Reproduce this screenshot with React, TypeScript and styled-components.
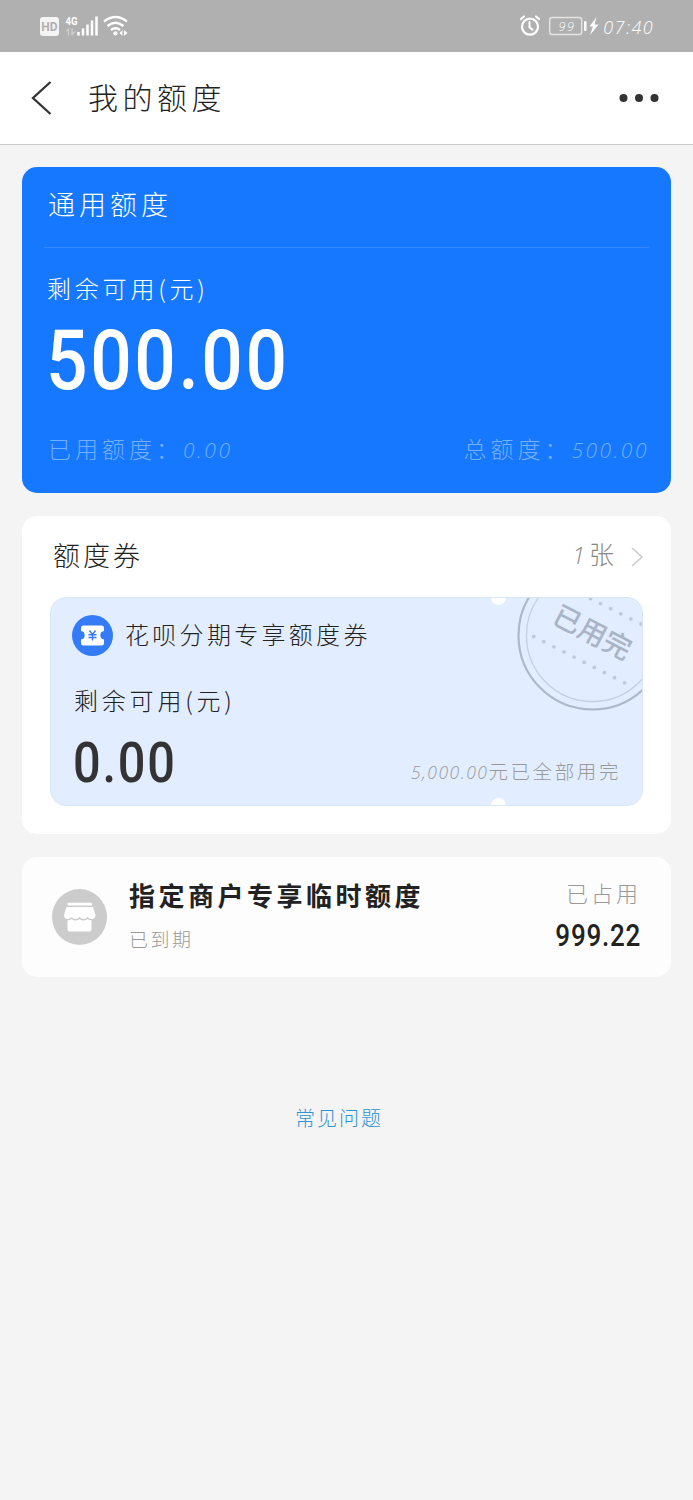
import React from 'react';
import styled, { createGlobalStyle } from 'styled-components';

const GlobalStyle = createGlobalStyle`
  * { box-sizing: border-box; }
  body {
    margin: 0;
    background: #f4f4f4;
    font-family: 'Noto Sans CJK SC', sans-serif;
    font-weight: 300;
  }
`;

const Page = styled.div`
  width: 693px;
  height: 1500px;
  background: #f4f4f4;
  display: flex;
  flex-direction: column;
  overflow: hidden;
`;

const StatusBar = styled.div`
  height: 52px;
  background: #b0b0b0;
  display: flex;
  justify-content: space-between;
  align-items: center;
  padding: 0 39px 0 39px;
`;

const StatusGroup = styled.div`
  display: flex;
  align-items: center;
  height: 52px;
`;

const Clock = styled.span`
  font-family: 'Open Sans', sans-serif;
  font-style: italic;
  font-weight: 300;
  font-size: 18px;
  line-height: 24px;
  letter-spacing: 1.4px;
  color: #fff;
  padding-top: 1px;
  margin-left: 3px;
`;

const NavBar = styled.header`
  height: 93px;
  background: #fff;
  border-bottom: 1px solid #cacaca;
  display: flex;
  align-items: center;
  padding: 0 34px 0 31px;
`;

const Text = styled.span<{ $size: number; $gap?: number; $color?: string; $weight?: number }>`
  font-size: ${(p) => p.$size}px;
  line-height: ${(p) => Math.round(p.$size * 1.4)}px;
  letter-spacing: ${(p) => p.$gap ?? 0}px;
  color: ${(p) => p.$color ?? '#222'};
  font-weight: ${(p) => p.$weight ?? 300};
  white-space: nowrap;
`;

const Title = styled(Text)`
  flex: 1;
  margin: 0 0 0 36px;
  padding-bottom: 5px;
`;

const Slant = styled.span<{ $size: number; $gap: number }>`
  font-family: 'Open Sans', sans-serif;
  font-style: italic;
  font-weight: 300;
  font-size: ${(p) => p.$size}px;
  letter-spacing: ${(p) => p.$gap}px;
`;

const Amount = styled.div<{ $size: number; $gap: number; $color: string; $right?: boolean }>`
  font-family: Roboto, sans-serif;
  font-weight: 500;
  font-size: ${(p) => p.$size}px;
  line-height: 1;
  letter-spacing: ${(p) => p.$gap}px;
  color: ${(p) => p.$color};
  transform: scaleX(${(p) => (p.$right ? 0.84 : 0.87)});
  transform-origin: ${(p) => (p.$right ? 'right' : 'left')} center;
  white-space: nowrap;
`;

const Content = styled.main`
  padding: 22px 22px 0;
  display: flex;
  flex-direction: column;
  gap: 23px;
`;

const QuotaCard = styled.section`
  height: 326px;
  border-radius: 15px;
  background: #1677ff;
  padding: 0 22px 0 26px;
  display: flex;
  flex-direction: column;
`;

const QuotaHead = styled.div`
  height: 81px;
  margin: 0 0 0 -4px;
  padding: 0 0 6px 4px;
  border-bottom: 1px solid #3287ff;
  display: flex;
  align-items: center;
`;

const QuotaLabel = styled.div`
  height: 80px;
  margin-left: -1px;
  display: flex;
  align-items: center;
`;

const QuotaAmount = styled.div`
  margin: -9px 0 0 -2px;
`;

const QuotaFoot = styled.div`
  display: flex;
  justify-content: space-between;
  margin-top: 29px;
`;

const CouponCard = styled.section`
  height: 318px;
  border-radius: 15px;
  background: #fff;
  padding: 0 28px;
`;

const CouponHead = styled.div`
  height: 81px;
  padding: 0 0 4px 3px;
  display: flex;
  align-items: center;
  justify-content: space-between;
`;

const More = styled.div`
  display: flex;
  align-items: center;
  gap: 14px;

  svg {
    margin-top: 4px;
  }
`;

const Coupon = styled.div`
  position: relative;
  height: 209px;
  border-radius: 16px;
  background: #e2eeff;
  border: 1px solid #d8e6fa;
  overflow: hidden;
  padding: 17px 21px 0;
`;

const CouponName = styled.div`
  display: flex;
  align-items: center;
  gap: 12px;
  height: 41px;

  span {
    padding-bottom: 3px;
  }
`;

const CouponLabel = styled.div`
  height: 34px;
  margin: 27px 0 0 2px;
`;

const CouponAmounts = styled.div`
  display: flex;
  justify-content: space-between;
  align-items: flex-end;
  margin: 18px 0 0 1px;
`;

const UsedUp = styled(Text)`
  margin-bottom: 5px;
`;

const Notch = styled.i<{ $bottom?: boolean }>`
  position: absolute;
  left: 440px;
  ${(p) => (p.$bottom ? 'bottom' : 'top')}: -8px;
  width: 15px;
  height: 15px;
  border-radius: 50%;
  background: #fff;
`;

const Stamp = styled.svg`
  position: absolute;
  right: -1px;
  top: -1px;
`;

const MerchantCard = styled.section`
  height: 120px;
  border-radius: 15px;
  background: #fdfdfd;
  display: flex;
  align-items: center;
  padding: 0 30px;
`;

const Column = styled.div<{ $end?: boolean }>`
  height: 120px;
  display: flex;
  flex-direction: column;
  align-items: ${(p) => (p.$end ? 'flex-end' : 'flex-start')};
`;

const MerchantText = styled(Column)`
  flex: 1;
  padding-top: 20px;
  margin-left: 22px;
  gap: 12px;
`;

const MerchantValue = styled(Column)`
  padding-top: 20px;
  gap: 12px;
`;

const Help = styled.div`
  align-self: center;
  margin: 104px 0 0 -15px;
  line-height: 1;
`;

const lowerDots = Array.from({ length: 10 }, (_, i) => [533.7 + i * 10.1, 636.5 + i * 5.15]);
const upperDots = Array.from({ length: 6 }, (_, i) => [590.5 + i * 10.1, 598.5 + i * 5.1]);

const StatusIcons = () => (
  <svg width="90" height="24" viewBox="39 14 90 24" fill="none">
    <rect x="40" y="17" width="19" height="19" rx="3" fill="#f4f4f4" />
    <text x="49.5" y="30.8" textAnchor="middle" fontFamily="Roboto" fontWeight="700" fontSize="12" fill="#b0b0b0">HD</text>
    <text x="65.5" y="24.6" fontFamily="Roboto" fontWeight="700" fontSize="11.5" textLength="12" lengthAdjust="spacingAndGlyphs" fill="#fff">4G</text>
    <path d="M66.500 31l2-2v6.500M72 28.500v7M72.500 33.500l3-2" stroke="#cfcfcf" strokeWidth="1.300" />
    <path d="M78.500 32v3.500M83 28.500v7M87.500 24.500v11M92 20.500v15M96.500 16.500v19" stroke="#fff" strokeWidth="2.500" />
    <path d="M104 21.500q11.500-9 23 0M107.500 26q8-6.500 16 0M111 30q4.500-3.500 9 0" stroke="#fff" strokeWidth="2.400" />
    <circle cx="115.500" cy="33.300" r="2.100" fill="#fff" />
    <path d="M119.500 33l3-3v6zM124 30l3.500 3-3.500 3z" fill="#fff" />
  </svg>
);

const PowerIcons = () => (
  <svg width="81" height="24" viewBox="519 14 81 24" fill="none">
    <g stroke="#fff" strokeLinecap="round">
      <circle cx="530" cy="26.700" r="8" strokeWidth="2.200" />
      <path d="M521 19l3-2.500M539 19l-3-2.500" strokeWidth="2.200" />
      <path d="M529.500 22v5.200l3 2.600" strokeWidth="2" />
    </g>
    <rect x="549.700" y="17.500" width="32" height="17" rx="2.500" stroke="#e4e4e4" strokeWidth="1.400" />
    <text x="558.500" y="31" fontFamily="Open Sans" fontStyle="italic" fontWeight="300" fontSize="12.500" letterSpacing="1.600" fill="#fff">99</text>
    <rect x="584" y="21" width="2.500" height="10" rx="1" fill="#fff" />
    <path d="M596.500 17l-7 9.500h3.500l-3 8.500 8.500-10.500h-4z" fill="#fff" />
  </svg>
);

const BackIcon = () => (
  <svg width="21" height="36" viewBox="0 0 21 36" fill="none" stroke="#333" strokeWidth="2.300">
    <path d="M19.500 2L2 18l17.500 16" />
  </svg>
);

const DotsIcon = () => (
  <svg width="40" height="10" viewBox="0 0 40 10" fill="#333">
    <circle cx="4.500" cy="5" r="4" />
    <circle cx="20" cy="5" r="4" />
    <circle cx="35.500" cy="5" r="4" />
  </svg>
);

const CouponIcon = () => (
  <svg width="41" height="41" viewBox="0 0 41 41">
    <circle cx="20.500" cy="20.500" r="20.500" fill="#347bf7" />
    <path d="M11.500 10.500h18a2.500 2.500 0 0 1 2.500 2.500v3a4.300 4.300 0 0 0 0 8.500V28a2.500 2.500 0 0 1-2.500 2.500h-18A2.500 2.500 0 0 1 9 28v-3.500a4.300 4.300 0 0 0 0-8.500V13a2.500 2.500 0 0 1 2.500-2.500z" fill="#fff" />
    <path d="M17.500 15.500l3 4 3-4M16.500 19.700h8M16.500 22.500h8M20.500 19.500v6" stroke="#347bf7" strokeWidth="1.400" fill="none" />
  </svg>
);

const ShopIcon = () => (
  <svg width="55" height="56" viewBox="0 0 55 56">
    <ellipse cx="27.500" cy="28" rx="27.500" ry="28" fill="#ccc" />
    <rect x="15.500" y="13.800" width="24.500" height="2.700" rx="1" fill="#fff" />
    <path d="M14.500 18h26.500l2.500 8q0 4-4 4-2.500 0-4-2-1.500 2-4 2t-4-2q-1.500 2-4 2t-4-2q-1.500 2-4 2-3.500 0-3.500-4z" fill="#fff" />
    <path d="M15.500 31.300q2.500 0 4-1.300 4 3 8 0 4 3 8 0 1.500 1.300 4 1.300v9.200a2 2 0 0 1-2 2h-20a2 2 0 0 1-2-2z" fill="#fff" />
  </svg>
);

export default function App() {
  return (
    <Page>
      <GlobalStyle />
      <StatusBar>
        <StatusGroup>
          <StatusIcons />
        </StatusGroup>
        <StatusGroup>
          <PowerIcons />
          <Clock>07:40</Clock>
        </StatusGroup>
      </StatusBar>
      <NavBar>
        <BackIcon />
        <Title as="h1" $size={30} $gap={4.5}>我的额度</Title>
        <DotsIcon />
      </NavBar>
      <Content>
        <QuotaCard>
          <QuotaHead>
            <Text $size={27} $gap={4} $color="#fff">通用额度</Text>
          </QuotaHead>
          <QuotaLabel>
            <Text $size={24} $gap={3.8} $color="#fff">剩余可用(元)</Text>
          </QuotaLabel>
          <QuotaAmount>
            <Amount $size={84} $gap={3} $color="#fff">500.00</Amount>
          </QuotaAmount>
          <QuotaFoot>
            <Text $size={23} $gap={4} $color="#74b0ff">已用额度：<Slant $size={21} $gap={2.5}>0.00</Slant></Text>
            <Text $size={23} $gap={4} $color="#74b0ff">总额度：<Slant $size={21} $gap={2.5}>500.00</Slant></Text>
          </QuotaFoot>
        </QuotaCard>

        <CouponCard>
          <CouponHead>
            <Text $size={27} $gap={3}>额度券</Text>
            <More>
              <Text $size={25} $gap={3} $color="#888"><Slant $size={23} $gap={4}>1</Slant>张</Text>
              <svg width="12" height="20" viewBox="0 0 12 20" fill="none" stroke="#ccc" strokeWidth="1.600">
                <path d="M1 1l10 9-10 9" />
              </svg>
            </More>
          </CouponHead>
          <Coupon>
            <CouponName>
              <CouponIcon />
              <Text $size={24} $gap={3.3}>花呗分期专享额度券</Text>
            </CouponName>
            <CouponLabel>
              <Text $size={24} $gap={3.8}>剩余可用(元)</Text>
            </CouponLabel>
            <CouponAmounts>
              <Amount $size={56} $gap={2} $color="#333">0.00</Amount>
              <UsedUp $size={19.5} $gap={2.6} $color="#999"><Slant $size={17.5} $gap={1.5}>5,000.00</Slant>元已全部用完</UsedUp>
            </CouponAmounts>
            <Stamp width="130" height="120" viewBox="513 597 130 120">
              <g fill="none" stroke="#acb9cc">
                <circle cx="592.500" cy="635.500" r="74" strokeWidth="2.200" />
                <circle cx="592.500" cy="635.500" r="66" strokeWidth="1.300" stroke="#c2d0e5" />
              </g>
              {[...lowerDots, ...upperDots].map(([x, y]) => (
                <circle key={`${x}-${y}`} cx={x} cy={y} r="1.900" fill="#bccadf" />
              ))}
              <text x="592.500" y="642.500" transform="rotate(27.500 592.500 632.500)" textAnchor="middle" fontSize="28" fontWeight="500" fill="#a9b5c7">已用完</text>
            </Stamp>
            <Notch />
            <Notch $bottom />
          </Coupon>
        </CouponCard>

        <MerchantCard>
          <ShopIcon />
          <MerchantText>
            <Text $size={26} $gap={3.5} $weight={700}>指定商户专享临时额度</Text>
            <Text $size={19} $gap={2.5} $color="#999">已到期</Text>
          </MerchantText>
          <MerchantValue $end>
            <Text $size={22} $gap={3} $color="#999">已占用</Text>
            <Amount $size={31} $gap={0.9} $color="#222" $right>999.22</Amount>
          </MerchantValue>
        </MerchantCard>

        <Help>
          <Text $size={20} $gap={2} $color="#2f93d0">常见问题</Text>
        </Help>
      </Content>
    </Page>
  );
}
